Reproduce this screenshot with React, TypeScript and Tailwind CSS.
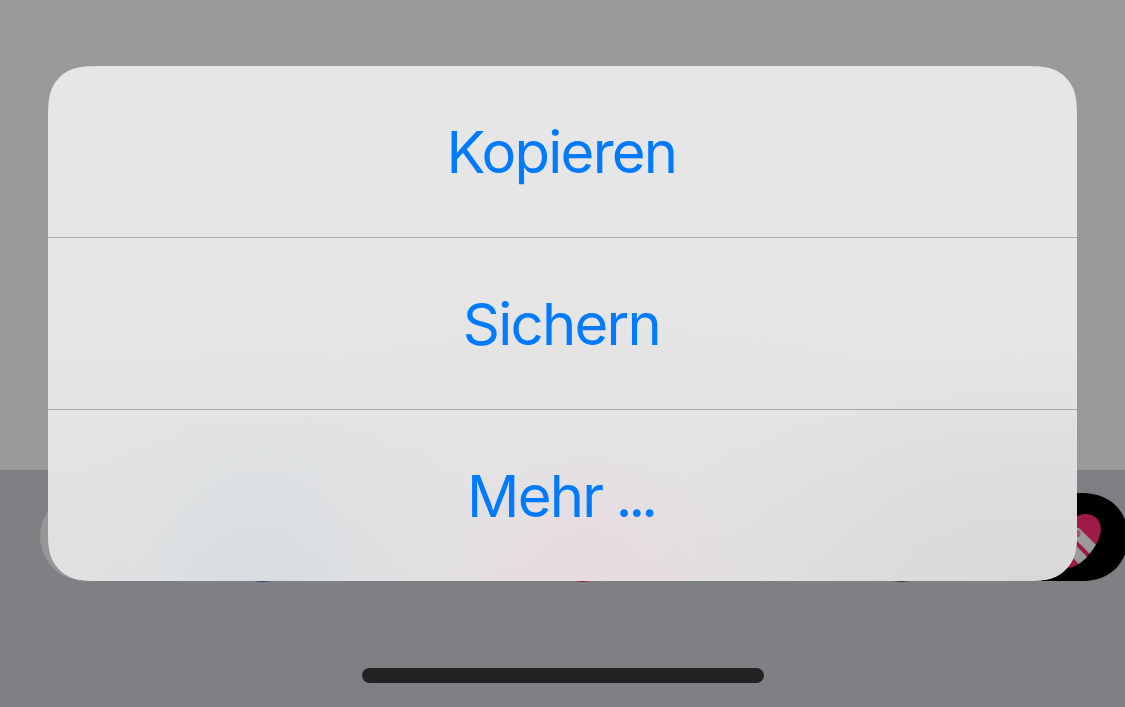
const actions = ['Kopieren', 'Sichern', 'Mehr']

function HeartApp() {
  return (
    <svg className="block h-[89px] w-[133px]" viewBox="0 0 133 89">
      <defs>
        <clipPath id="heart">
          <path d="M74 34C76 27 82 22 89 22C100 22 105 29 105 38C104 48 98 57 90 66C85 71 79 75 72 76C60 72 38 60 34 45C32 32 40 22 50 22C60 22 68 26 74 34Z" />
        </clipPath>
      </defs>
      <path d="M44 1H86C114 1 132 19 132 45C132 71 114 89 86 89H44C18 89 0 70 0 45C0 19 18 1 44 1Z" fill="#000" />
      <g clipPath="url(#heart)">
        <rect width="133" height="89" fill="#9e1b45" />
        <path d="M75 36L83 36L103 56L95 63L72 40Z" fill="#9b9b9b" />
        <path d="M72 45L93 67L85 75L66 53Z" fill="#9b9b9b" />
        <circle cx="81" cy="41.5" r="3.5" fill="#a84d6b" />
      </g>
    </svg>
  )
}

function AppStrip() {
  return (
    <div className="flex h-[90px] items-start justify-between pl-10 -mr-1">
      <div className="h-[89px] w-[129px] rounded-full bg-[#969696]" />
      <div className="h-[90px] w-[89px] rounded-full bg-[#244a7d]" />
      <div className="h-[89px] w-[129px] rounded-full bg-[#808187]" />
      <div className="h-[90px] w-[89px] rounded-full bg-[#7d2639]" />
      <div className="h-[89px] w-[129px] rounded-full bg-[#808187]" />
      <div className="h-[90px] w-[89px] rounded-full bg-[#333437]" />
      <HeartApp />
    </div>
  )
}

function ActionSheet() {
  return (
    <div className="absolute top-[66px] left-12 flex h-[515px] w-[1029px] flex-col divide-y divide-[#a9a9aa] bg-[#e6e6e6] bg-[radial-gradient(ellipse_200px_240px_at_215px_515px,#d2dae299,#d5dee433_60%,transparent),radial-gradient(ellipse_150px_130px_at_540px_520px,#ebd5dc99,#ead9de55_55%,transparent),radial-gradient(ellipse_330px_280px_at_550px_460px,#e9dfe355,transparent),radial-gradient(ellipse_420px_240px_at_1000px_530px,#d6d3d4aa,transparent),linear-gradient(to_bottom,transparent_45%,#e0e0e0)] [clip-path:path('M59.6_0H969.4C986.55_0_995.13_0_1004.37_2.92C1014.46_6.59_1022.41_14.54_1026.08_24.63C1029_33.87_1029_42.45_1029_59.6V455.4C1029_472.55_1029_481.13_1026.08_490.37C1022.41_500.46_1014.46_508.41_1004.37_512.08C995.13_515_986.55_515_969.4_515H59.6C42.45_515_33.87_515_24.63_512.08C14.54_508.41_6.59_500.46_2.92_490.37C0_481.13_0_472.55_0_455.4V59.6C0_42.45_0_33.87_2.92_24.63C6.59_14.54_14.54_6.59_24.63_2.92C33.87_0_42.45_0_59.6_0Z')]">
      {actions.map((label) => (
        <button
          key={label}
          className="flex min-h-0 flex-1 items-center justify-center pt-px pr-0.5 text-[58px] leading-none tracking-[-1.75px] whitespace-pre text-[#007aff]"
        >
          {label}
          {label === 'Mehr' && <span className="mr-0.5 ml-px tracking-[-4px]">{' ...'}</span>}
        </button>
      ))}
    </div>
  )
}

export default function App() {
  return (
    <div className="relative flex h-[707px] w-[1125px] flex-col overflow-hidden bg-[#999] font-['Inter',sans-serif]">
      <div className="h-[470px]" />
      <div className="flex flex-1 flex-col bg-[#7f8084] pt-[22px]">
        <AppStrip />
        <div className="mx-auto mt-auto mb-6 h-[15px] w-[402px] rounded-full bg-[#222]" />
      </div>
      <ActionSheet />
    </div>
  )
}
